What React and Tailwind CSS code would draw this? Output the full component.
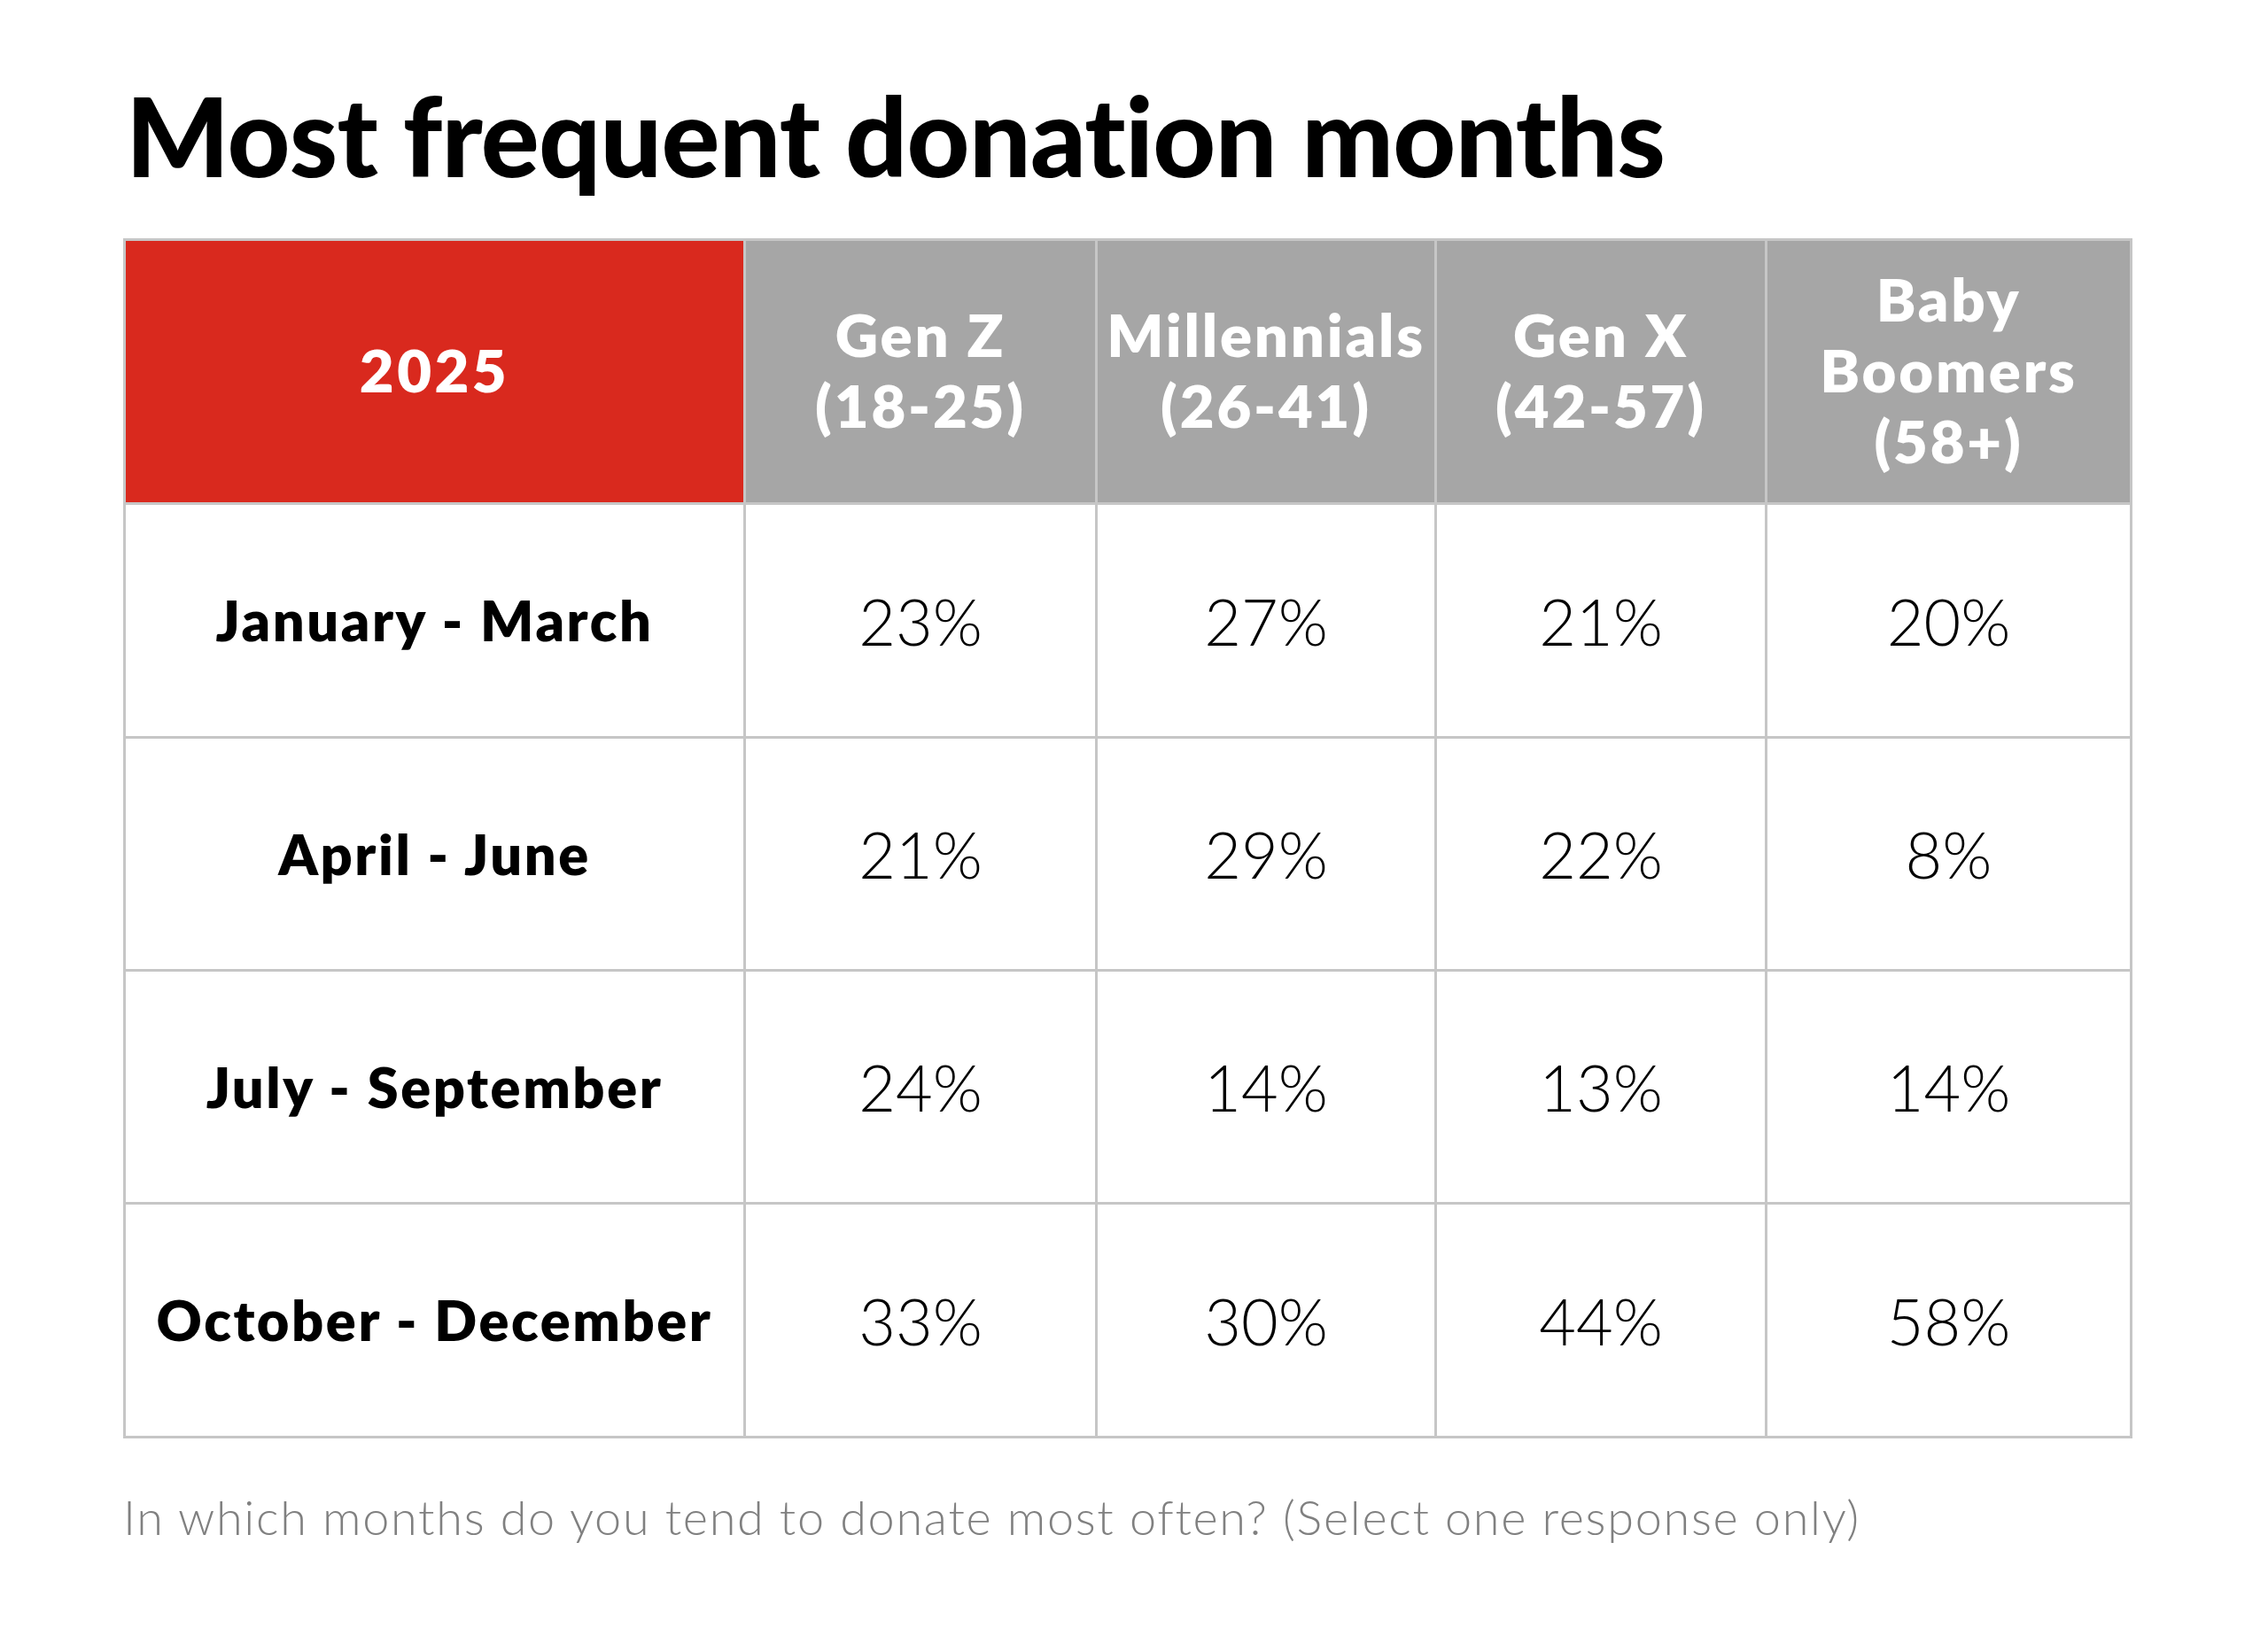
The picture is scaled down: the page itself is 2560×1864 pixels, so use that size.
const ageGroups = [
  ["Gen Z", "(18-25)"],
  ["Millennials", "(26-41)"],
  ["Gen X", "(42-57)"],
  ["Baby", "Boomers", "(58+)"],
]

const rows = [
  { label: "January - March", values: ["23%", "27%", "21%", "20%"] },
  { label: "April - June", values: ["21%", "29%", "22%", "8%"] },
  { label: "July - September", values: ["24%", "14%", "13%", "14%"] },
  { label: "October - December", values: ["33%", "30%", "44%", "58%"] },
]

export default function App() {
  return (
    <div className="min-h-screen bg-white pl-[139px] pt-[91px] font-['Lato',sans-serif]">
      <h1 className="pl-[3px] text-[123px] font-black leading-none tracking-[-0.7px] text-black">
        Most frequent donation months
      </h1>

      <div className="mt-[55px] grid w-[2268px] grid-cols-[697px_394px_380px_370px_409px] grid-rows-[295px_261px_260px_260px_261px] gap-[3px] bg-[#c6c6c6] p-[3px]">
        <div className="flex items-center justify-center bg-[#d9291e] pb-[4px] text-[67px] font-extrabold tracking-[3.5px] text-white">
          2025
        </div>
        {ageGroups.map((lines) => (
          <div
            key={lines.join(" ")}
            className="flex flex-col items-center justify-center bg-[#a6a6a6] pb-[6px] text-center text-[67px] font-extrabold leading-[80px] tracking-[2.8px] text-white"
          >
            {lines.map((line) => (
              <span key={line}>{line}</span>
            ))}
          </div>
        ))}

        {rows.map((row) => (
          <Row key={row.label} {...row} />
        ))}
      </div>

      <p className="mt-[62px] text-[54px] font-light leading-none tracking-[1.7px] text-[#808080]">
        In which months do you tend to donate most often? (Select one response only)
      </p>
    </div>
  )
}

const Row = ({ label, values }) => {
  return (
    <>
      <div className="flex items-center justify-center bg-white text-[63px] font-extrabold tracking-[2.6px] text-black">
        {label}
      </div>
      {values.map((value, i) => (
        <div
          key={i}
          className="flex items-center justify-center bg-white text-[72px] font-light text-black"
        >
          {value}
        </div>
      ))}
    </>
  )
}
